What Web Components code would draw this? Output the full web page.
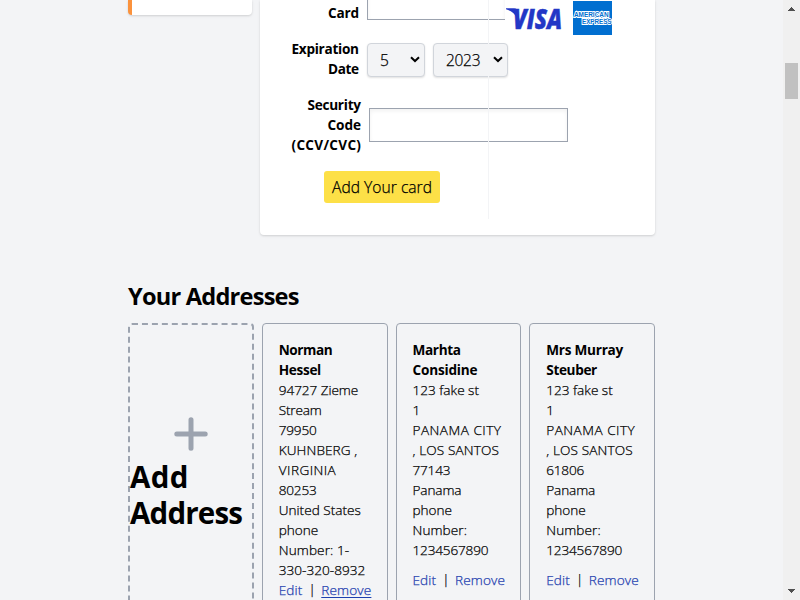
<!DOCTYPE html>
<html lang="en">
<head>
<meta charset="utf-8">
<title>Account</title>
<style>
html,body{margin:0;height:600px;overflow:hidden;background:#f3f4f6}
body{font-family:"Open Sans","Noto Sans",sans-serif;color:#000}
</style>
</head>
<body>
<account-page></account-page>
<script>
const define = (name, html, setup) => customElements.define(name, class extends HTMLElement {
  connectedCallback() {
    if (!this.shadowRoot) {
      this.attachShadow({mode: 'open'}).innerHTML = typeof html === 'function' ? html(this) : html;
    }
    if (setup) setup(this);
  }
});

// A single line of text tracked to a given width.
define('text-line', `<style>:host{display:block;white-space:pre;flex:none}span{display:inline-block;vertical-align:top}:host(.active) span{text-decoration:underline;text-underline-offset:2px;text-decoration-thickness:1px}</style><span><slot></slot></span>`, el => {
  const w = parseFloat(el.getAttribute('w'));
  const span = el.shadowRoot.querySelector('span');
  const natural = span.getBoundingClientRect().width;
  const n = el.textContent.length;
  if (w && n > 1) {
    const step = (w - natural) / (n - 1);
    span.style.letterSpacing = step + 'px';
    span.style.marginRight = -step + 'px';
  }
});

define('side-box', `<style>:host{display:block;box-sizing:border-box;width:124px;height:15px;background:#fff;border-left:4px solid #fb923c;border-radius:0 0 4px 4px;box-shadow:0 1px 3px rgba(0,0,0,.1),0 1px 2px rgba(0,0,0,.06)}</style>`);

define('field-label', `<style>:host{display:block;text-align:right;font-weight:700;font-size:13.6px;line-height:20px}</style><slot></slot>`);

define('text-field', `<style>:host{display:block;box-sizing:border-box;height:34px;background:#fff;border:1px solid #9ca3af;box-shadow:inset 0 2px 4px rgba(0,0,0,.06)}</style>`);

define('select-box', el => `<style>:host{display:flex;justify-content:space-between;align-items:center;box-sizing:border-box;height:34px;padding:0 4px 0 12px;background:#f3f4f6;border:1px solid #d1d5db;border-radius:4px;font-size:15.5px;font-weight:300;-webkit-text-stroke:.25px currentColor;line-height:22px;box-shadow:0 1px 2px rgba(0,0,0,.12)}svg{display:block;margin-top:-2px}</style><text-line w="${el.getAttribute('w')}">${el.getAttribute('value')}</text-line><svg width="10" height="7" viewBox="0 0 10 7"><path d="M1 1.2 5 5 9 1.2" fill="none" stroke="#000" stroke-width="2"/></svg>`);

define('visa-logo', `<style>:host{display:block;width:57px;height:34px;background:#fff}svg{display:block;overflow:visible}text{font:italic 800 28px "Open Sans",sans-serif}</style>
<svg width="57" height="34" viewBox="0 0 57 34"><path d="M1 7.2h8q3.2 0 3.8 3l2.8 14-3.8-7.6Q8.5 10.4 1 8.2z" fill="#2337c6"/><text x="8" y="28" fill="#2337c6" stroke="#2337c6" stroke-width=".5" textLength="49" lengthAdjust="spacingAndGlyphs">VISA</text></svg>`);

define('amex-logo', `<style>:host{display:block;width:39px;height:34px}svg{display:block;overflow:visible}text{font:700 6.4px "Liberation Sans",sans-serif;fill:#016fd0;stroke:#fff;stroke-width:1.8px;paint-order:stroke}</style>
<svg width="39" height="34" viewBox="0 0 39 34"><rect width="39" height="34" fill="#016fd0"/><text x="1" y="16" textLength="34.5" lengthAdjust="spacingAndGlyphs">AMERICAN</text><text x="9" y="23.3" textLength="29.5" lengthAdjust="spacingAndGlyphs">EXPRESS</text></svg>`);

define('yellow-button', `<style>:host{display:block;box-sizing:border-box;width:116px;height:32px;padding:0 8px;background:#fde047;border-radius:3px;font-size:15.6px;font-weight:300;-webkit-text-stroke:.25px currentColor;line-height:33px}</style><slot></slot>`);

define('card-form', `<style>
:host{display:block;position:relative;box-sizing:border-box;width:395px;height:235px;background:#fff;border-radius:0 0 4px 4px;box-shadow:0 1px 3px rgba(0,0,0,.1),0 1px 2px rgba(0,0,0,.06)}
.row{display:flex}
.number{height:35px}
.number field-label{width:99px;margin-top:3px}
.number text-field{width:138px;margin:-14px 0 0 8px;border-right:0}
visa-logo{margin-top:1px}
amex-logo{margin:1px 0 0 11px}
.date{margin-top:4px}
.date field-label{width:99px}
.date select-box{margin:4px 0 0 8px}
.code{margin-top:16px}
.code field-label{width:101px}
.code text-field{width:199px;margin:13px 0 0 8px}
yellow-button{margin:16px 0 0 64px}
.divider{position:absolute;left:228px;top:0;width:1px;height:219px;background:#f3f4f6}
field-label text-line{display:flex;justify-content:flex-end}
</style>
<div class="row number"><field-label><text-line w="31">Card</text-line></field-label><text-field></text-field><visa-logo></visa-logo><amex-logo></amex-logo></div>
<div class="row date"><field-label><text-line w="67.5">Expiration</text-line><text-line w="31">Date</text-line></field-label><select-box style="width:58px" w="9" value="5"></select-box><select-box style="width:75px" w="34.5" value="2023"></select-box></div>
<div class="row code"><field-label><text-line w="53.5">Security</text-line><text-line w="33.5">Code</text-line><text-line w="69.5">(CCV/CVC)</text-line></field-label><text-field></text-field></div>
<yellow-button><text-line w="100">Add Your card</text-line></yellow-button>
<div class="divider"></div>`);

define('add-address', `<style>
:host{display:flex;flex-direction:column;justify-content:center;box-sizing:border-box;border:2px dashed #9ca3af;border-radius:4px;font-weight:700;font-size:29.5px;line-height:36px}
svg{display:block;align-self:center;margin-bottom:-1px}
text-line:last-child{margin-bottom:1px}
</style><svg width="52" height="52" viewBox="0 0 52 52"><path d="M26 11.8v28.4M11.8 26h28.4" stroke="#9ca3af" stroke-width="5" stroke-linecap="round"/></svg><text-line w="58.5">Add</text-line><text-line w="113">Address</text-line>`);

define('address-card', el => `<style>
:host{display:block;box-sizing:border-box;padding:16px 12px 16px 16px;border:1px solid #9ca3af;border-radius:4px;font-size:13.6px;font-weight:300;-webkit-text-stroke:.25px currentColor;line-height:20px}
.links{display:grid;grid-template-columns:30px 12.5px auto;justify-content:start;color:#1e40af;margin-top:${el.getAttribute('gap') || 0}px}
.bar{color:#000;font-size:12.5px}
</style><slot></slot><div class="links"><text-line w="23.5">Edit</text-line><text-line class="bar">|</text-line><text-line class="${el.hasAttribute('active') ? 'active' : ''}" w="50">Remove</text-line></div>`);

define('scroll-rail', `<style>
:host{display:flex;flex-direction:column;justify-content:space-between;position:fixed;right:0;top:0;width:17px;height:600px;background:#f0f0f0}
svg{display:block}i{display:block;width:13px;height:36px;margin:46px 0 auto 2px;background:#c1c1c1}
</style><svg width="17" height="17"><path d="M8 7h1v1h1v1h1v1h1v1H5v-1h1V9h1V8h1z" fill="#505050"/></svg><i></i><svg width="17" height="17"><path d="M5 6h7v1h-1v1h-1v1H9v1H8V9H7V8H6V7H5z" fill="#505050"/></svg>`);

define('account-page', `<style>
:host{display:block;box-sizing:border-box;height:600px;width:655px;padding-left:128px}
.top{display:flex;gap:8px}
h2{margin:45px 0 11px;font-size:23.6px;line-height:32px;font-weight:700}
.grid{display:grid;grid-template-columns:repeat(4,minmax(0,1fr));gap:8px;height:294px}
b{display:block;font-weight:700;-webkit-text-stroke:0}
</style>
<div class="top"><side-box></side-box><card-form></card-form></div>
<h2><text-line w="171.5">Your Addresses</text-line></h2>
<div class="grid">
<add-address></add-address>
<address-card active><b><text-line w="54">Norman</text-line><text-line w="42.5">Hessel</text-line></b><text-line w="79.5">94727 Zieme</text-line><text-line w="43">Stream</text-line><text-line w="38">79950</text-line><text-line w="78.5">KUHNBERG ,</text-line><text-line w="57">VIRGINIA</text-line><text-line w="38">80253</text-line><text-line w="82">United States</text-line><text-line w="39.5">phone</text-line><text-line w="70.5">Number: 1-</text-line><text-line w="86.5">330-320-8932</text-line></address-card>
<address-card gap="10"><b><text-line w="48.5">Marhta</text-line><text-line w="65">Considine</text-line></b><text-line w="66.5">123 fake st</text-line><text-line>1</text-line><text-line w="88.5">PANAMA CITY</text-line><text-line w="86.5">, LOS SANTOS</text-line><text-line w="38">77143</text-line><text-line w="49">Panama</text-line><text-line w="39.5">phone</text-line><text-line w="54.5">Number:</text-line><text-line w="76">1234567890</text-line></address-card>
<address-card gap="10"><b><text-line w="77">Mrs Murray</text-line><text-line w="51">Steuber</text-line></b><text-line w="66.5">123 fake st</text-line><text-line>1</text-line><text-line w="88.5">PANAMA CITY</text-line><text-line w="86.5">, LOS SANTOS</text-line><text-line w="38">61806</text-line><text-line w="49">Panama</text-line><text-line w="39.5">phone</text-line><text-line w="54.5">Number:</text-line><text-line w="76">1234567890</text-line></address-card>
</div>
<scroll-rail></scroll-rail>`);
</script>
</body>
</html>
